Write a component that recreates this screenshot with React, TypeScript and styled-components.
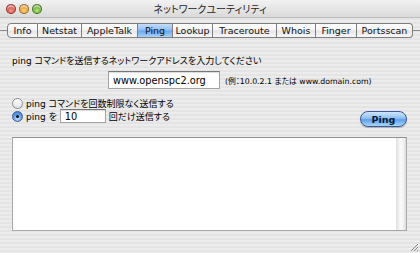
import React from "react";
import styled, { createGlobalStyle } from "styled-components";

const GlobalStyle = createGlobalStyle`
  html, body { margin: 0; padding: 0; }
  body { width: 420px; height: 253px; overflow: hidden; }
  * { box-sizing: border-box; }
`;

const FONT = `"DejaVu Sans", "Noto Sans CJK JP", sans-serif`;

const Window = styled.div`
  position: relative;
  width: 420px;
  height: 253px;
  display: flex;
  flex-direction: column;
  font-family: ${FONT};
  font-feature-settings: "palt";
  font-size: 9px;
  color: #000;
  background: repeating-linear-gradient(
    to bottom,
    #ececec 0px,
    #ececec 2px,
    #e4e4e4 2px,
    #e4e4e4 4px
  );
  overflow: hidden;
`;

const TitleBar = styled.div`
  height: 18px;
  display: grid;
  grid-template-columns: 1fr auto 1fr;
  align-items: center;
  padding: 0 6px;
  background: linear-gradient(to bottom, #f2f2f2, #dadada);
  border-bottom: 1px solid #bdbdbd;
`;

const Lights = styled.div`
  display: flex;
  gap: 3px;
`;

const Light = styled.span<{ $c1: string; $c2: string }>`
  width: 10px;
  height: 10px;
  border-radius: 50%;
  background: radial-gradient(circle at 50% 70%, ${(p) => p.$c2} 0%, ${(p) => p.$c1} 75%);
  border: 1px solid rgba(0, 0, 0, 0.35);
  box-shadow: inset 0 2px 1px rgba(255, 255, 255, 0.6);
`;

const Title = styled.div`
  font-size: 10px;
  color: #222;
`;

const TabStrip = styled.div`
  position: relative;
  margin-top: 5px;
  display: flex;
  padding-left: 7px;
  &::before {
    content: "";
    position: absolute;
    left: 0;
    right: 0;
    top: 7px;
    height: 1px;
    background: #8a8a8a;
  }
`;

const Tab = styled.div<{ $w: number; $active?: boolean }>`
  position: relative;
  width: ${(p) => p.$w}px;
  height: 15px;
  display: flex;
  align-items: center;
  justify-content: center;
  font-size: 9.5px;
  color: #111;
  border: 1px solid #7e7e7e;
  border-left: none;
  background: ${(p) =>
    p.$active
      ? "linear-gradient(to bottom, #c4def9 0%, #8fbff2 45%, #6aa8ec 55%, #a9d3fa 100%)"
      : "linear-gradient(to bottom, #ffffff 0%, #f4f4f4 45%, #e6e6e6 55%, #f7f7f7 100%)"};
  &:first-child {
    border-left: 1px solid #7e7e7e;
    border-radius: 4px 0 0 4px;
  }
  &:last-child {
    border-radius: 0 4px 4px 0;
  }
`;

const Content = styled.div`
  display: flex;
  flex-direction: column;
  padding: 17px 13px 0 12px;
`;

const Prompt = styled.div`
  height: 13px;
  line-height: 13px;
  white-space: nowrap;
`;

const AddressRow = styled.div`
  display: flex;
  align-items: center;
  margin-top: 3px;
  padding-left: 96px;
  gap: 5px;
`;

const TextInput = styled.div<{ $w: number; $h: number }>`
  width: ${(p) => p.$w}px;
  height: ${(p) => p.$h}px;
  flex: none;
  display: flex;
  align-items: center;
  padding-left: 4px;
  font-size: 9.8px;
  background: #fff;
  border: 1px solid #a3a3a3;
  border-top-color: #777;
  box-shadow: inset 0 1px 1px rgba(0, 0, 0, 0.15);
`;

const Hint = styled.span`
  font-size: 7.8px;
  white-space: nowrap;
`;

const OptionsRow = styled.div`
  display: flex;
  align-items: flex-start;
  justify-content: space-between;
  margin-top: 9px;
`;

const RadioGroup = styled.div`
  display: flex;
  flex-direction: column;
`;

const RadioRow = styled.div<{ $h: number }>`
  display: flex;
  align-items: center;
  height: ${(p) => p.$h}px;
  gap: 3px;
  white-space: nowrap;
`;

const RadioDot = styled.span<{ $on?: boolean }>`
  width: 11px;
  height: 11px;
  border-radius: 50%;
  flex: none;
  position: relative;
  border: 1px solid ${(p) => (p.$on ? "#3f5e9a" : "#8a8a8a")};
  background: ${(p) =>
    p.$on
      ? "radial-gradient(circle at 50% 75%, #bfe0ff 0%, #5b9ae8 55%, #3f73c9 100%)"
      : "linear-gradient(to bottom, #fefefe, #e2e2e2)"};
  &::after {
    content: "";
    display: ${(p) => (p.$on ? "block" : "none")};
    position: absolute;
    left: 3px;
    top: 3px;
    width: 3px;
    height: 3px;
    border-radius: 50%;
    background: #111;
  }
`;

const PingButton = styled.div`
  width: 47px;
  height: 16px;
  margin-top: 13px;
  border-radius: 8px;
  display: flex;
  align-items: center;
  justify-content: center;
  font-weight: bold;
  font-size: 9.5px;
  color: #0a1a33;
  border: 1px solid #3a5a98;
  background: linear-gradient(to bottom, #cfe5fb 0%, #8ec0f2 45%, #5e9fea 55%, #a6d6fd 100%);
  box-shadow: 0 1px 1px rgba(0, 0, 0, 0.25);
`;

const Output = styled.div`
  margin-top: 10px;
  height: 94px;
  display: flex;
  background: #fff;
  border: 1px solid #a8a8a8;
  border-top-color: #909090;
`;

const OutputBody = styled.div`
  flex: 1;
`;

const ScrollTrack = styled.div`
  width: 10px;
  background: linear-gradient(to right, #e6e6e6 0%, #fafafa 40%, #f2f2f2 70%, #dcdcdc 100%);
  border-left: 1px solid #e0e0e0;
`;

const Grip = styled.svg`
  position: absolute;
  right: 1px;
  bottom: 1px;
`;

const tabs: [string, number][] = [
  ["Info", 31],
  ["Netstat", 44],
  ["AppleTalk", 56],
  ["Ping", 35],
  ["Lookup", 40],
  ["Traceroute", 64],
  ["Whois", 39],
  ["Finger", 41],
  ["Portsscan", 56],
];

export default function App() {
  return (
    <>
      <GlobalStyle />
      <Window>
        <TitleBar>
          <Lights>
            <Light $c1="#d2332c" $c2="#ff9c8f" />
            <Light $c1="#e08a16" $c2="#ffd57a" />
            <Light $c1="#4e9a1f" $c2="#b6ec7c" />
          </Lights>
          <Title>ネットワークユーティリティ</Title>
          <span />
        </TitleBar>
        <TabStrip>
          {tabs.map(([t, w]) => (
            <Tab key={t} $w={w} $active={t === "Ping"}>
              {t}
            </Tab>
          ))}
        </TabStrip>
        <Content>
          <Prompt>ping コマンドを送信するネットワークアドレスを入力してください</Prompt>
          <AddressRow>
            <TextInput $w={112} $h={18}>www.openspc2.org</TextInput>
            <Hint>(例：10.0.2.1 または www.domain.com)</Hint>
          </AddressRow>
          <OptionsRow>
            <RadioGroup>
              <RadioRow $h={11}>
                <RadioDot />
                ping コマンドを回数制限なく送信する
              </RadioRow>
              <RadioRow $h={14}>
                <RadioDot $on />
                ping を
                <TextInput $w={46} $h={14}>10</TextInput>
                回だけ送信する
              </RadioRow>
            </RadioGroup>
            <PingButton>Ping</PingButton>
          </OptionsRow>
          <Output>
            <OutputBody />
            <ScrollTrack />
          </Output>
        </Content>
        <Grip width="10" height="10" viewBox="0 0 10 10">
          <path d="M9 2 L2 9 M9 5 L5 9 M9 8 L8 9" stroke="#8a8a8a" strokeWidth="1" />
        </Grip>
      </Window>
    </>
  );
}
